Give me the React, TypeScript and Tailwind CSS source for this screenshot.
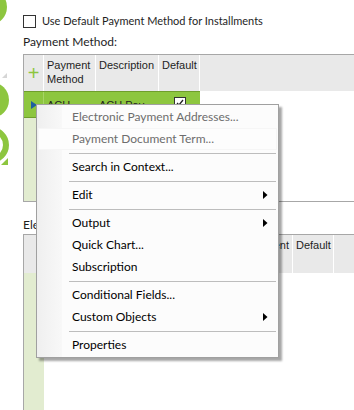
import React from "react"

type Item = { label: string; disabled?: boolean; sub?: boolean; hover?: boolean } | "sep"

const items: Item[] = [
  { label: "Electronic Payment Addresses...", disabled: true },
  { label: "Payment Document Term...", disabled: true, hover: true },
  "sep",
  { label: "Search in Context..." },
  "sep",
  { label: "Edit", sub: true },
  "sep",
  { label: "Output", sub: true },
  { label: "Quick Chart..." },
  { label: "Subscription" },
  "sep",
  { label: "Conditional Fields..." },
  { label: "Custom Objects", sub: true },
  "sep",
  { label: "Properties" },
]

function SubArrow() {
  return (
    <svg width="5" height="8" viewBox="0 0 5 8" className="absolute left-[226px] top-[7px]">
      <path d="M0 0 L4.5 4 L0 8 Z" fill="#000" />
    </svg>
  )
}

function ContextMenu() {
  return (
    <div className="absolute left-[36px] top-[104px] w-[243px] border border-[#a0a0a0] bg-[#fcfcfc] py-[1px] shadow-[3px_3px_2px_rgba(0,0,0,0.35)]">
      <div className="absolute left-0 top-0 bottom-0 w-[25px] bg-gradient-to-r from-[#efefef] to-[#f8f8f8]" />
      {items.map((it, i) =>
        it === "sep" ? (
          <div key={i} className="relative flex h-[6px] items-center pl-[32px] pr-[2px]">
            <div className="h-px w-full bg-[#bdbdbd]" />
          </div>
        ) : (
          <div
            key={i}
            className={
              "relative flex h-[22px] items-center text-[12px] " +
              (it.disabled ? "text-[#6d6d6d] " : "text-[#000] ") +
              (it.hover ? "mx-[1px] border border-[#f6f6f6] bg-[#fdfdfd] pl-[33px]" : "pl-[35px]")
            }
          >
            <span className="relative">{it.label}</span>
            {it.sub && <SubArrow />}
          </div>
        )
      )}
    </div>
  )
}

function LeftStrip() {
  return (
    <svg width="23" height="410" viewBox="0 0 23 410" className="shrink-0">
      <circle cx="-11" cy="7" r="18" fill="#8dc63f" />
      <path d="M2 78 L7 73 L7 78 Z" fill="#d6d6d6" />
      <circle cx="-9" cy="100" r="18" fill="#8dc63f" />
      <circle cx="-9" cy="145" r="15" fill="none" stroke="#8dc63f" strokeWidth="6" />
      <path d="M1 165 L8 158 L8 165 Z" fill="#8dc63f" />
    </svg>
  )
}

export default function App() {
  return (
    <div className="relative flex h-[410px] w-[354px] overflow-hidden bg-white font-['Lato',sans-serif] text-[#1e1e1e]">
      <LeftStrip />
      <div className="flex flex-1 flex-col pt-[14px]">
        {/* installments checkbox */}
        <div className="flex h-[14px] items-center gap-[6px]">
          <div className="h-[13px] w-[13px] border border-[#333] bg-white" />
          <span className="text-[11px]">Use Default Payment Method for Installments</span>
        </div>
        <div className="mt-[6px] h-[16px] text-[12px] leading-[16px]">Payment Method:</div>

        {/* payment method grid */}
        <div className="mt-[4px] flex h-[148px] flex-col border-l border-t border-b border-[#a7a7a7] font-['Liberation_Sans',sans-serif] text-[11px]">
          <div className="flex h-[36px] bg-[#e9e9e9]">
            <div className="flex w-[20px] items-center justify-center border-r border-white text-[20px] leading-none text-[#8dc63f]">
              +
            </div>
            <div className="w-[52px] border-r border-white px-[3px] pt-[3px] leading-[14px]">
              Payment
              <br />
              Method
            </div>
            <div className="w-[63px] border-r border-white px-[3px] pt-[3px] leading-[14px]">Description</div>
            <div className="w-[41px] border-r border-white px-[3px] pt-[3px] leading-[14px]">Default</div>
            <div className="flex-1" />
          </div>
          <div className="flex h-[27px] w-[176px] border-y border-[#6f9e2c] bg-[#8dc63f]">
            <div className="flex w-[20px] items-center justify-center border-r border-[#a6d466]">
              <svg width="6" height="8" viewBox="0 0 6 8">
                <path d="M0 0 L6 4 L0 8 Z" fill="#1f5fa0" />
              </svg>
            </div>
            <div className="w-[52px] px-[3px] pt-[5px]">ACH</div>
            <div className="w-[63px] px-[3px] pt-[5px]">ACH Pay</div>
            <div className="flex w-[41px] justify-center pt-[5px]">
              <div className="flex h-[12px] w-[12px] items-center justify-center border border-[#333] bg-white">
                <svg width="8" height="8" viewBox="0 0 8 8">
                  <path d="M1 4 L3 6 L7 1" fill="none" stroke="#222" strokeWidth="1.3" />
                </svg>
              </div>
            </div>
          </div>
          <div className="flex flex-1">
            <div className="w-[20px] bg-[#e2ecd0]" />
          </div>
        </div>

        <div className="mt-[15px] h-[16px] text-[12px] leading-[16px]">Electronic Payment Addresses:</div>

        {/* electronic addresses grid */}
        <div className="mt-[1px] flex flex-1 flex-col border-l border-t border-[#a7a7a7] font-['Liberation_Sans',sans-serif] text-[11px]">
          <div className="flex h-[38px] bg-[#e9e9e9]">
            <div className="w-[20px] border-r border-white" />
            <div className="w-[166px] border-r border-white" />
            <div className="w-[83px] border-r border-white px-[3px] pt-[3px] text-right leading-[14px]">Payment</div>
            <div className="w-[41px] border-r border-white px-[3px] pt-[3px] leading-[14px]">Default</div>
            <div className="flex-1" />
          </div>
          <div className="flex flex-1">
            <div className="w-[20px] bg-[#e2ecd0]" />
          </div>
        </div>
      </div>
      <ContextMenu />
    </div>
  )
}
